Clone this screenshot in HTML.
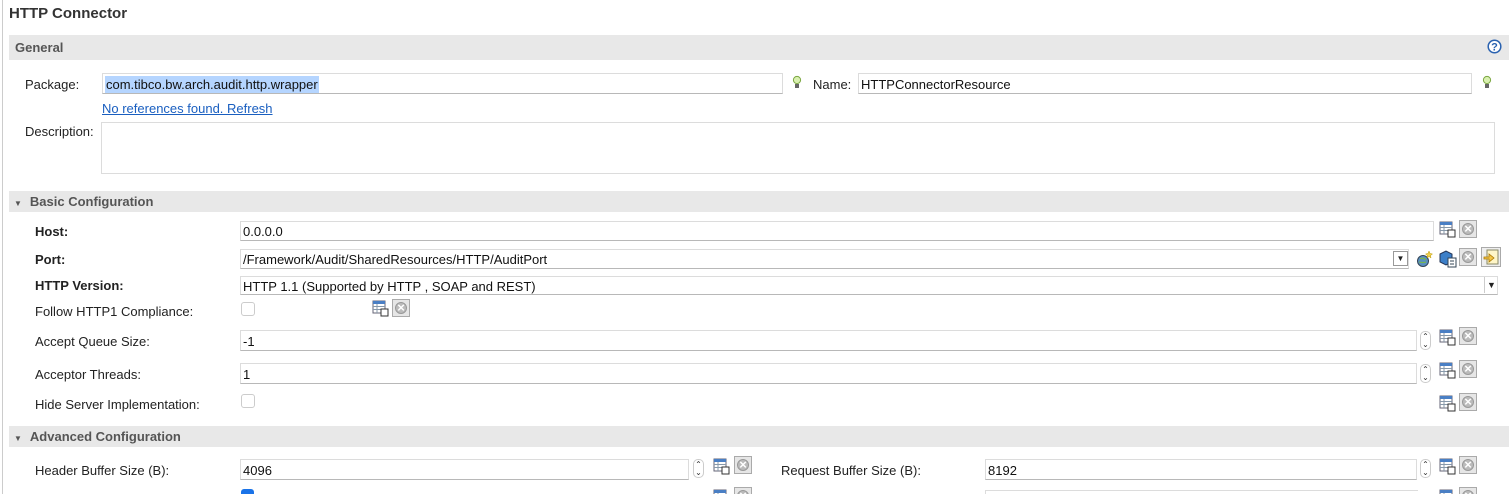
<!DOCTYPE html>
<html style="height:494px;overflow:hidden"><head><meta charset="utf-8"><style>
body{margin:0;width:1509px;height:494px;overflow:hidden;background:#fff;font-family:"Liberation Sans",Arial,sans-serif;font-size:13px;color:#222;position:relative}
.a{position:absolute;white-space:nowrap}
.bar{position:absolute;left:9px;right:0;background:#e8e8e8;height:21px;font-weight:bold;font-size:13px;color:#555;line-height:21px}
.in{position:absolute;border:1px solid #dcdcdc;border-bottom-color:#b8b8b8;background:#fff;height:19px;line-height:19px;padding-left:2px;box-sizing:border-box;font-size:13px;color:#111}
.lb{position:absolute;font-size:13px;color:#222;white-space:nowrap}
.b{font-weight:bold;font-size:13px}
.tb{position:absolute;width:17px;height:17px}
.cx{position:absolute;width:18px;height:18px;border:1px solid #aaa;background:#e6e6e6;box-sizing:border-box}
.cx:after{content:"";position:absolute;left:2px;top:2px;width:12px;height:12px;border-radius:50%;background:#bbb;border:1px solid #999;box-sizing:border-box}
.cx:before{content:"×";position:absolute;left:0;top:0;width:16px;line-height:16px;text-align:center;color:#fff;font-weight:bold;font-size:13px;z-index:1}
.cb{position:absolute;width:12px;height:12px;border:1px solid #ccc;border-radius:3px;background:#fff}
.sp{position:absolute;width:11px;height:19px;border:1px solid #ccc;border-radius:5px;font-size:8px;line-height:8px;text-align:center;color:#333;box-sizing:border-box;padding-top:1px}
</style></head><body>
<div class="a" style="left:2px;top:0;width:1px;height:494px;background:#ccc"></div>
<div class="a" style="left:9px;top:5px;font-weight:bold;font-size:15px;color:#333">HTTP Connector</div>
<div class="bar" style="top:35px;height:25px;line-height:25px;padding-left:6px">General</div>
<svg class="a" style="left:1487px;top:39px" width="15" height="15"><circle cx="7.5" cy="7.5" r="6.3" fill="#fff" stroke="#2a62b0" stroke-width="1.5"/><text x="7.5" y="11.5" font-size="11" font-weight="bold" fill="#2a62b0" text-anchor="middle" font-family="Liberation Sans">?</text></svg>

<div class="lb" style="left:25px;top:77px">Package:</div>
<div class="in" style="left:102px;top:73px;width:681px;height:21px;line-height:21px"><span style="background:#b5d5ff;padding:1px 1px">com.tibco.bw.arch.audit.http.wrapper</span></div>
<svg class="a" style="left:792px;top:75px" width="10" height="14"><circle cx="5" cy="5" r="3.6" fill="#d9f0b0" stroke="#7aa640"/><rect x="3" y="9" width="4" height="4" fill="#666"/></svg>
<div class="lb" style="left:813px;top:77px">Name:</div>
<div class="in" style="left:858px;top:73px;width:614px;height:21px;line-height:21px">HTTPConnectorResource</div>
<svg class="a" style="left:1482px;top:75px" width="10" height="14"><circle cx="5" cy="5" r="3.6" fill="#d9f0b0" stroke="#7aa640"/><rect x="3" y="9" width="4" height="4" fill="#666"/></svg>
<div class="lb" style="left:102px;top:101px;color:#1a5fc0;text-decoration:underline">No references found. Refresh</div>
<div class="lb" style="left:25px;top:124px">Description:</div>
<div class="in" style="left:101px;top:122px;width:1394px;height:52px;border-color:#dcdcdc"></div>

<div class="bar" style="top:191px"><span style="font-size:8px;margin-left:5px;margin-right:8px">▼</span>Basic Configuration</div>

<div class="lb b" style="left:35px;top:224px">Host:</div>
<div class="in" style="left:240px;top:221px;width:1194px;height:20px">0.0.0.0</div>
<div class="lb b" style="left:35px;top:252px">Port:</div>
<div class="in" style="left:240px;top:249px;width:1169px;height:20px">/Framework/Audit/SharedResources/HTTP/AuditPort</div>
<div class="a" style="left:1393px;top:251px;width:13px;height:13px;border:1px solid #999;font-size:8px;text-align:center;line-height:13px">▼</div>
<div class="lb b" style="left:35px;top:278px">HTTP Version:</div>
<div class="in" style="left:240px;top:276px;width:1258px;height:19px">HTTP 1.1 (Supported by HTTP , SOAP and REST)</div>
<div class="a" style="left:1484px;top:277px;width:13px;height:16px;border-left:1px solid #ccc;font-size:9px;text-align:center;line-height:16px">▼</div>
<div class="lb" style="left:35px;top:304px">Follow HTTP1 Compliance:</div>
<div class="cb" style="left:241px;top:302px"></div>
<div class="lb" style="left:35px;top:334px">Accept Queue Size:</div>
<div class="in" style="left:240px;top:330px;width:1177px;height:21px;line-height:22px">-1</div>
<div class="sp" style="left:1420px;top:331px">⌃<br>⌄</div>
<div class="lb" style="left:35px;top:367px">Acceptor Threads:</div>
<div class="in" style="left:240px;top:363px;width:1177px;height:21px;line-height:22px">1</div>
<div class="sp" style="left:1420px;top:364px">⌃<br>⌄</div>
<div class="lb" style="left:35px;top:397px">Hide Server Implementation:</div>
<div class="cb" style="left:241px;top:394px"></div>

<div class="bar" style="top:426px"><span style="font-size:8px;margin-left:5px;margin-right:8px">▼</span>Advanced Configuration</div>

<div class="lb" style="left:35px;top:463px">Header Buffer Size (B):</div>
<div class="in" style="left:240px;top:459px;width:449px;height:21px;line-height:22px">4096</div>
<div class="sp" style="left:693px;top:459px">⌃<br>⌄</div>
<div class="lb" style="left:781px;top:463px">Request Buffer Size (B):</div>
<div class="in" style="left:985px;top:459px;width:432px;height:21px;line-height:22px">8192</div>
<div class="sp" style="left:1420px;top:459px">⌃<br>⌄</div>
<div class="a" style="left:241px;top:489px;width:13px;height:5px;background:#1a73e8;border-radius:3px 3px 0 0"></div>
<div class="a" style="left:985px;top:490px;width:432px;height:4px;border-top:1px solid #dcdcdc;border-left:1px solid #dcdcdc"></div>

<svg width="0" height="0" style="position:absolute"><defs><g id="t"><rect x="1" y="1" width="12" height="12" fill="#fff" stroke="#667"/><rect x="1" y="1" width="12" height="3" fill="#4a7fc4"/><line x1="1" y1="6.5" x2="13" y2="6.5" stroke="#89a"/><line x1="1" y1="9.5" x2="13" y2="9.5" stroke="#89a"/><line x1="5" y1="4" x2="5" y2="13" stroke="#89a"/><rect x="9" y="9" width="7" height="7" fill="#fff" stroke="#333"/></g></defs></svg>
<svg class="tb" style="left:1439px;top:221px"><use href="#t"/></svg><div class="cx" style="left:1459px;top:220px"></div>
<svg class="tb" style="left:372px;top:300px"><use href="#t"/></svg><div class="cx" style="left:392px;top:299px"></div>
<svg class="tb" style="left:1439px;top:329px"><use href="#t"/></svg><div class="cx" style="left:1459px;top:327px"></div>
<svg class="tb" style="left:1439px;top:362px"><use href="#t"/></svg><div class="cx" style="left:1459px;top:360px"></div>
<svg class="tb" style="left:1439px;top:395px"><use href="#t"/></svg><div class="cx" style="left:1459px;top:393px"></div>
<svg class="tb" style="left:713px;top:458px"><use href="#t"/></svg><div class="cx" style="left:734px;top:456px"></div>
<svg class="tb" style="left:1439px;top:458px"><use href="#t"/></svg><div class="cx" style="left:1459px;top:456px"></div>
<div class="a" style="left:713px;top:489px;width:17px;height:5px;overflow:hidden"><svg class="tb" style="left:0;top:0"><use href="#t"/></svg></div>
<div class="a" style="left:734px;top:487px;width:18px;height:7px;overflow:hidden"><div class="cx" style="left:0;top:0"></div></div>
<div class="a" style="left:1439px;top:489px;width:17px;height:5px;overflow:hidden"><svg class="tb" style="left:0;top:0"><use href="#t"/></svg></div>
<div class="a" style="left:1459px;top:487px;width:18px;height:7px;overflow:hidden"><div class="cx" style="left:0;top:0"></div></div>

<svg class="a" style="left:1416px;top:250px" width="18" height="18"><circle cx="7" cy="11" r="5.5" fill="#5a8fc0" stroke="#345"/><path d="M4 9 q3 -2 6 1 M3 12 q4 1 7 0" stroke="#7b4" fill="none"/><path d="M13 1 l1 2.5 2.5 .5 -2 1.5 .5 2.5 -2 -1.5 -2 1.5 .5 -2.5 -2 -1.5 2.5 -.5z" fill="#f0d050" stroke="#b90" stroke-width=".5"/></svg>
<svg class="a" style="left:1439px;top:250px" width="18" height="18"><path d="M1 4 l6 -3 6 3 v8 l-6 3 -6 -3z" fill="#3c7fc8" stroke="#235"/><rect x="9" y="8" width="8" height="9" fill="#fff" stroke="#345"/><line x1="11" y1="11" x2="15" y2="11" stroke="#345"/><line x1="11" y1="14" x2="15" y2="14" stroke="#345"/></svg>
<div class="cx" style="left:1459px;top:248px"></div>
<div class="a" style="left:1481px;top:247px;width:20px;height:20px;border:1px solid #aaa;background:#eee;box-sizing:border-box"><svg width="18" height="18"><rect x="5" y="2" width="11" height="14" fill="#fff6c8" stroke="#886"/><path d="M2 9 h5 v-3 l5 4 -5 4 v-3 h-5z" fill="#f2c64a" stroke="#a70" stroke-width=".8"/></svg></div>
</body></html>
